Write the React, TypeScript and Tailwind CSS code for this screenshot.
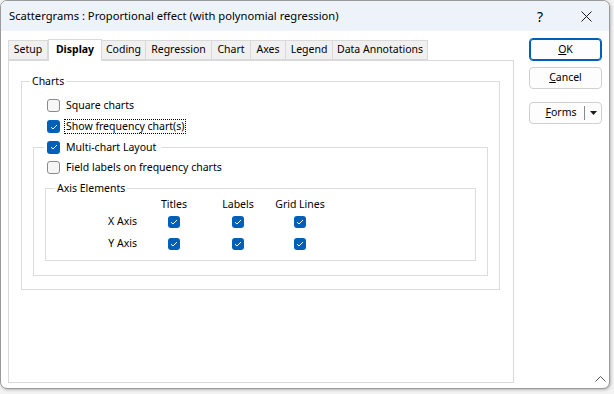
import React from 'react'

const font = { fontFamily: '"Segoe UI", "Noto Sans", "Liberation Sans", sans-serif' }

function Check({ checked, size = 13 }: { checked: boolean; size?: number }) {
    if (!checked) {
        return <span className="inline-block shrink-0 rounded-[3px] border border-[#8a8a8a] bg-[#f6f6f6]" style={{ width: size, height: size }} />
    }
    return (
        <span className="inline-flex shrink-0 items-center justify-center rounded-[3px] bg-[#005fb8]" style={{ width: size, height: size }}>
            <svg width="8" height="6" viewBox="0 0 8 6" fill="none">
                <path d="M1 3.2 L3 5 L7 1" stroke="white" strokeWidth="1" />
            </svg>
        </span>
    )
}

const tabs = ['Setup', 'Display', 'Coding', 'Regression', 'Chart', 'Axes', 'Legend', 'Data Annotations']
const tabWidths = [40, 54, 44, 66, 39, 35, 47, 95]

function Row({ checked, label, focus = false }: { checked: boolean; label: string; focus?: boolean }) {
    return (
        <div className="flex h-[21px] items-center gap-[4px]">
            <Check checked={checked} />
            <span className={focus ? 'border border-dotted border-black px-[1px] leading-[13px]' : 'px-[2px]'}>{label}</span>
        </div>
    )
}

export default function App() {
    return (
        <div className="h-[394px] w-[614px] bg-[#f3f3f3] text-[10.5px] text-black" style={font}>
            <div className="flex h-[389px] w-[610px] flex-col overflow-hidden rounded-[7px] border border-[#9a9a9a] bg-white shadow-[1px_1px_3px_rgba(0,0,0,0.25)]">
                {/* title bar */}
                <div className="flex h-[30px] shrink-0 items-center bg-[#eef3fa] pl-[8px] text-[11.2px]">
                    <span className="flex-1">Scattergrams : Proportional effect (with polynomial regression)</span>
                    <span className="w-[46px] text-center text-[14px]">?</span>
                    <span className="flex w-[46px] items-center justify-center">
                        <svg width="11" height="11" viewBox="0 0 11 11">
                            <path d="M0.5 0.5 L10.5 10.5 M10.5 0.5 L0.5 10.5" stroke="#1a1a1a" strokeWidth="1" />
                        </svg>
                    </span>
                </div>

                {/* body */}
                <div className="relative flex flex-1 pl-[7px] pt-[7px]">
                    <div className="flex w-[506px] flex-col">
                        <div className="flex h-[22px] items-end">
                            {tabs.map((t, i) => (
                                <div
                                    key={t}
                                    style={{ width: tabWidths[i] }}
                                    className={
                                        t === 'Display'
                                            ? 'relative z-10 -mb-[1px] flex h-[22px] items-center justify-center border border-b-0 border-[#d9d9d9] bg-white pb-[1px] font-bold'
                                            : 'flex h-[20px] items-center justify-center border border-l-0 border-[#d9d9d9] bg-[#f0f0f0] first:border-l'
                                    }
                                >
                                    {t}
                                </div>
                            ))}
                        </div>

                        <div className="h-[323px] border border-[#d9d9d9] pl-[12px] pt-[12px]">
                            <fieldset className="w-[479px] border border-[#dcdcdc] px-[12px] pb-[13px]">
                                <legend className="-ml-[4px] px-[2px] leading-[16px]">Charts</legend>
                                <div className="mt-[6px] pl-[13px]">
                                    <Row checked={false} label="Square charts" />
                                    <Row checked={true} label="Show frequency chart(s)" focus />
                                </div>

                                <fieldset className="-ml-[1px] -mr-[1px] mt-[2px] border border-[#dcdcdc] pl-[10px] pb-[14px]">
                                    <legend className="flex items-center gap-[4px] px-[3px] leading-[16px]">
                                        <Check checked={true} />
                                        <span className="px-[2px]">Multi-chart Layout</span>
                                    </legend>
                                    <div className="mt-[2px] pl-[3px]">
                                        <Row checked={false} label="Field labels on frequency charts" />
                                    </div>

                                    <fieldset className="ml-[1px] mt-[2px] w-[431px] border border-[#dcdcdc] pb-[6px] pl-[9px]">
                                        <legend className="px-[2px] leading-[16px]">Axis Elements</legend>
                                        <div className="grid grid-cols-[82px_74px_54px_70px]">
                                            <div className="h-[16px]" />
                                            <div className="h-[16px] text-center leading-[16px]">Titles</div>
                                            <div className="h-[16px] text-center leading-[16px]">Labels</div>
                                            <div className="h-[16px] text-center leading-[16px]">Grid Lines</div>

                                            <div className="flex h-[20px] items-center justify-end">X Axis</div>
                                            <div className="flex h-[20px] items-center justify-center"><Check checked size={12} /></div>
                                            <div className="flex h-[20px] items-center justify-center"><Check checked size={12} /></div>
                                            <div className="flex h-[20px] items-center justify-center"><Check checked size={12} /></div>

                                            <div className="mt-[2px] flex h-[20px] items-center justify-end">Y Axis</div>
                                            <div className="mt-[2px] flex h-[20px] items-center justify-center"><Check checked size={12} /></div>
                                            <div className="mt-[2px] flex h-[20px] items-center justify-center"><Check checked size={12} /></div>
                                            <div className="mt-[2px] flex h-[20px] items-center justify-center"><Check checked size={12} /></div>
                                        </div>
                                    </fieldset>
                                </fieldset>
                            </fieldset>
                        </div>
                    </div>

                    {/* buttons */}
                    <div className="ml-[15px] flex w-[73px] flex-col">
                        <button className="h-[23px] rounded-[4px] border border-[#005fb8] bg-[#fdfdfd] shadow-[inset_0_0_0_1px_#005fb8]">
                            <u>O</u>K
                        </button>
                        <button className="mt-[6px] h-[22px] rounded-[4px] border border-[#d0d0d0] bg-[#fdfdfd]">
                            <u>C</u>ancel
                        </button>
                        <div className="mt-[13px] flex h-[22px] items-center rounded-[4px] border border-[#d0d0d0] bg-[#fdfdfd]">
                            <span className="flex-1 pl-[8px] text-center">
                                <u>F</u>orms
                            </span>
                            <span className="h-[14px] w-px bg-[#8a8a8a]" />
                            <span className="flex w-[16px] items-center justify-center">
                                <svg width="7" height="4" viewBox="0 0 7 4">
                                    <path d="M0 0 H7 L3.5 4 Z" fill="#1a1a1a" />
                                </svg>
                            </span>
                        </div>
                    </div>

                    {/* resize grip */}
                    <svg className="absolute bottom-[6px] right-[3px]" width="11" height="6" viewBox="0 0 11 6">
                        <path d="M0.5 5.5 L5.5 0.5 L10.5 5.5" stroke="#555" strokeWidth="1" fill="none" />
                    </svg>
                </div>
            </div>
        </div>
    )
}
